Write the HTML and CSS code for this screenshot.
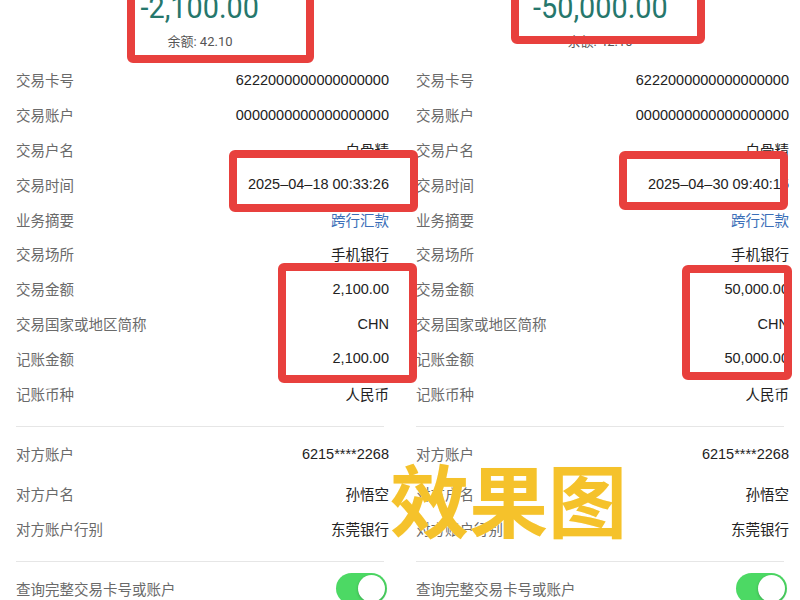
FILE: index.html
```html
<!DOCTYPE html>
<html lang="zh-CN">
<head>
<meta charset="utf-8">
<title>效果图</title>
<link rel="stylesheet" href="styles.css">
</head>
<body>
<div class="page">
  <section class="panel">
    <header class="head">
      <div class="amount"><span class="amount-text">-2,100.00</span></div>
      <div class="balance">余额: 42.10</div>
    </header>
    <div class="list">
      <div class="row"><span class="label">交易卡号</span><span class="value">6222000000000000000</span></div>
      <div class="row"><span class="label">交易账户</span><span class="value">0000000000000000000</span></div>
      <div class="row"><span class="label">交易户名</span><span class="value">白骨精</span></div>
      <div class="row"><span class="label">交易时间</span><span class="value">2025–04–18 00:33:26</span></div>
      <div class="row"><span class="label">业务摘要</span><span class="value link">跨行汇款</span></div>
      <div class="row"><span class="label">交易场所</span><span class="value">手机银行</span></div>
      <div class="row"><span class="label">交易金额</span><span class="value">2,100.00</span></div>
      <div class="row"><span class="label">交易国家或地区简称</span><span class="value">CHN</span></div>
      <div class="row"><span class="label">记账金额</span><span class="value">2,100.00</span></div>
      <div class="row"><span class="label">记账币种</span><span class="value">人民币</span></div>
    </div>
    <div class="list counter">
      <div class="row first"><span class="label">对方账户</span><span class="value">6215****2268</span></div>
      <div class="row"><span class="label">对方户名</span><span class="value">孙悟空</span></div>
      <div class="row"><span class="label">对方账户行别</span><span class="value">东莞银行</span></div>
    </div>
    <div class="toggle-row">
      <span class="label">查询完整交易卡号或账户</span>
      <span class="switch"><span class="knob"></span></span>
    </div>
  </section>

  <section class="panel">
    <header class="head">
      <div class="amount"><span class="amount-text">-50,000.00</span></div>
      <div class="balance">余额: 42.10</div>
    </header>
    <div class="list">
      <div class="row"><span class="label">交易卡号</span><span class="value">6222000000000000000</span></div>
      <div class="row"><span class="label">交易账户</span><span class="value">0000000000000000000</span></div>
      <div class="row"><span class="label">交易户名</span><span class="value">白骨精</span></div>
      <div class="row"><span class="label">交易时间</span><span class="value">2025–04–30 09:40:15</span></div>
      <div class="row"><span class="label">业务摘要</span><span class="value link">跨行汇款</span></div>
      <div class="row"><span class="label">交易场所</span><span class="value">手机银行</span></div>
      <div class="row"><span class="label">交易金额</span><span class="value">50,000.00</span></div>
      <div class="row"><span class="label">交易国家或地区简称</span><span class="value">CHN</span></div>
      <div class="row"><span class="label">记账金额</span><span class="value">50,000.00</span></div>
      <div class="row"><span class="label">记账币种</span><span class="value">人民币</span></div>
    </div>
    <div class="list counter">
      <div class="row first"><span class="label">对方账户</span><span class="value">6215****2268</span></div>
      <div class="row"><span class="label">对方户名</span><span class="value">孙悟空</span></div>
      <div class="row"><span class="label">对方账户行别</span><span class="value">东莞银行</span></div>
    </div>
    <div class="toggle-row">
      <span class="label">查询完整交易卡号或账户</span>
      <span class="switch"><span class="knob"></span></span>
    </div>
  </section>

  <div class="mark mark-l1"></div>
  <div class="mark mark-l2"></div>
  <div class="mark mark-l3"></div>
  <div class="mark mark-r1"></div>
  <div class="mark mark-r2"></div>
  <div class="mark mark-r3"></div>
  <div class="stamp">效果图</div>
</div>
</body>
</html>
```

FILE: styles.css
```css
html, body {
  margin: 0;
  padding: 0;
  background: #ffffff;
}

body {
  font-family: "Liberation Sans", "Noto Sans CJK SC", sans-serif;
  font-size: 14.5px;
  color: #222222;
  overflow: hidden;
}

.page {
  position: relative;
  display: flex;
  width: 800px;
  height: 600px;
  overflow: hidden;
}

.panel {
  width: 400px;
  flex: 0 0 400px;
  background: #ffffff;
}

.head {
  display: flex;
  flex-direction: column;
  align-items: center;
  height: 62.6px;
  box-sizing: border-box;
}

.amount {
  margin-top: -8px;
  height: 32px;
  line-height: 32px;
}

.amount-text {
  display: inline-block;
  font-family: "Roboto", "Liberation Sans", sans-serif;
  font-weight: 400;
  font-size: 31px;
  color: #26776c;
  transform: scaleX(0.93);
}

.balance {
  margin-top: 8px;
  line-height: 20px;
  font-family: "Roboto", "Noto Sans CJK SC", sans-serif;
  font-size: 13px;
  color: #555555;
}

.list {
  padding: 0 11px 15px 16px;
}

.row {
  display: flex;
  justify-content: space-between;
  align-items: center;
  height: 34.8px;
}

.label {
  font-family: "Noto Sans CJK SC", sans-serif;
  color: #6a6a6a;
  font-size: 14.5px;
}

.value {
  font-family: "Liberation Sans", "Noto Sans CJK SC", sans-serif;
  color: #222222;
  white-space: nowrap;
}

.value.link {
  color: #3b6fb8;
}

.counter {
  border-top: 1px solid #e6e6e6;
  margin-left: 16px;
  margin-right: 16px;
  padding: 10px 0 15px 0;
}

.counter .row {
  margin-right: -5px;
}

.counter .row.first {
  margin-bottom: 5px;
}

.toggle-row {
  display: flex;
  justify-content: space-between;
  align-items: center;
  height: 54px;
  margin: 0 16px;
  border-top: 1px solid #e6e6e6;
  box-sizing: border-box;
}

.switch {
  position: relative;
  display: block;
  width: 51px;
  height: 31px;
  border-radius: 16px;
  background: #4cd964;
  margin-right: -3px;
}

.knob {
  position: absolute;
  top: 2px;
  right: 2px;
  width: 27px;
  height: 27px;
  border-radius: 50%;
  background: #ffffff;
  box-shadow: 0 1px 3px rgba(0, 0, 0, 0.25);
}

.mark {
  position: absolute;
  box-sizing: border-box;
  border: 8px solid #e8403d;
  border-radius: 6px;
}

.mark-l1 { left: 127px; top: -14px; width: 187px; height: 77px; }
.mark-l2 { left: 229px; top: 150px; width: 189px; height: 62px; }
.mark-l3 { left: 278px; top: 263px; width: 139px; height: 120px; }
.mark-r1 { left: 511px; top: -14px; width: 194px; height: 58px; }
.mark-r2 { left: 619px; top: 151px; width: 169px; height: 59px; }
.mark-r3 { left: 682px; top: 265px; width: 110px; height: 115px; }

.stamp {
  position: absolute;
  left: 390px;
  top: 458px;
  font-family: "Noto Sans CJK SC", sans-serif;
  font-weight: 700;
  font-size: 79px;
  line-height: 80px;
  color: #f5c22b;
  text-shadow: 0 0 1px #fff3c8;
  white-space: nowrap;
}
```
